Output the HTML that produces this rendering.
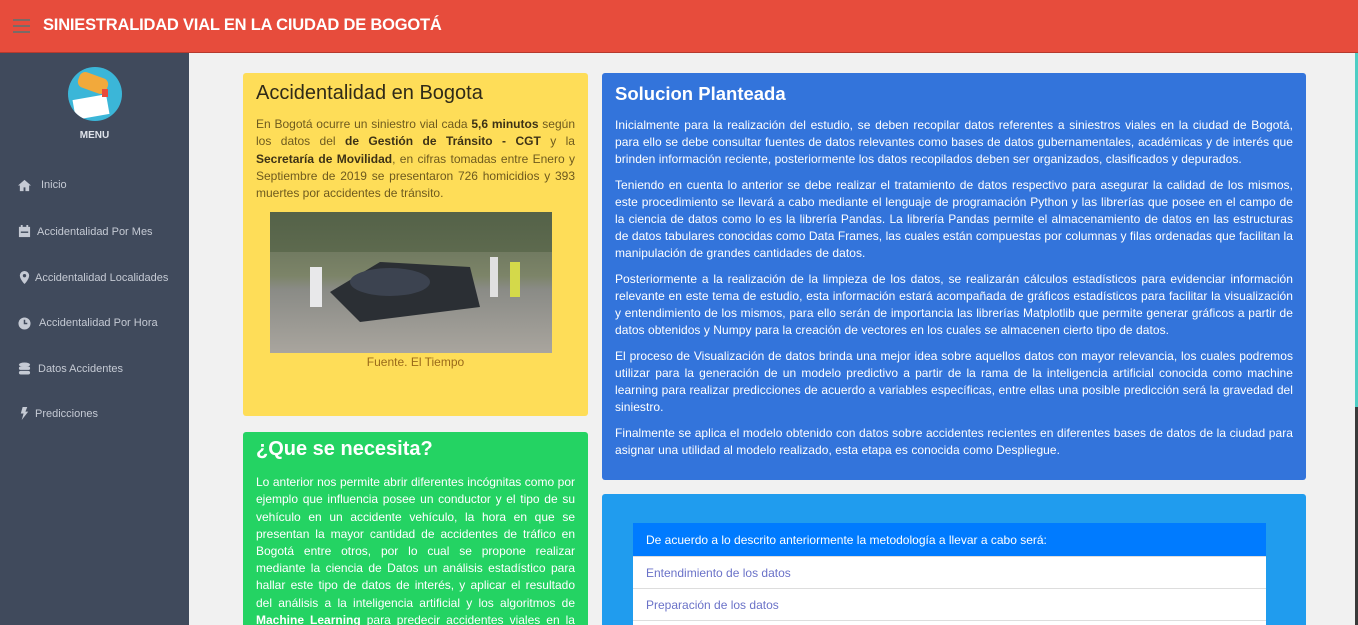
<!DOCTYPE html>
<html><head><meta charset="utf-8"><style>
*{margin:0;padding:0;box-sizing:border-box}
html{overflow:hidden;height:625px}
body{width:1358px;height:625px;overflow:hidden;background:#f1f1f1;font-family:"Liberation Sans",sans-serif;position:relative}
.hdr{position:absolute;left:0;top:0;width:1358px;height:53px;background:#e74c3c;border-bottom:1px solid #b53a2e}
.hdr .t{position:absolute;left:43px;top:16px;color:#fff;font-weight:bold;font-size:16.5px;letter-spacing:-0.2px}
.burger{position:absolute;left:13px;top:19px;width:17px}
.burger i{display:block;height:2px;background:#7a6a66;margin-bottom:4px}
.side{position:absolute;left:0;top:53px;width:189px;height:572px;background:#404a5c}
.logo{position:absolute;left:68px;top:14px;width:54px;height:54px;border-radius:50%;background:#3bb6d8;overflow:hidden}
.menu{position:absolute;left:0;width:189px;top:77px;text-align:center;color:#dfe3ea;font-weight:bold;font-size:10px}
.it{position:absolute;color:#c5cad4;font-size:11px}
.ic{position:absolute;left:18px;width:13px;height:13px}
.card{position:absolute;border-radius:3px;padding:0 13px;text-align:justify;font-size:12px;line-height:17.2px;overflow:hidden}
.card h2{font-weight:normal;font-size:20px;margin:12px 0 14px}
.y{left:243px;top:73px;width:345px;height:343px;background:#fedd58;color:#6e5a1e}
.y b{color:#3d3216;font-weight:bold}
.y h2{color:#2f2a18}
.g{left:243px;top:432px;width:345px;height:200px;background:#24d363;color:#fff}
.g h2{font-weight:bold;font-size:20px;margin:9px 0 16px}
.bl{left:602px;top:73px;width:704px;height:407px;background:#3374db;color:#fff;letter-spacing:0.05px;line-height:17px}
.bl h2{font-weight:bold;font-size:18.5px;margin:12px 0 15px;letter-spacing:0}
.bl p{margin-bottom:9px}
.lb{position:absolute;left:602px;top:494px;width:704px;height:140px;background:#209cee;border-radius:3px;overflow:hidden}
.list{position:absolute;left:31px;top:29px;width:633px;background:#fff;border-radius:3px 3px 0 0}
.list div{height:32px;line-height:32px;padding-left:13px;font-size:12px;color:#6a72c8;border-bottom:1px solid #ddd}
.list .h{height:34px;line-height:34px;background:#007bff;color:#fff}
.sb{position:absolute;left:1355px;top:53px;width:3px;height:354px;background:#4ecdc4}
.sb2{position:absolute;left:1355px;top:407px;width:3px;height:218px;background:#3a3a3a}
</style></head><body>
<div class="hdr"><div class="burger"><i></i><i></i><i></i></div><div class="t">SINIESTRALIDAD VIAL EN LA CIUDAD DE BOGOTÁ</div></div>
<div class="side">
 <div class="logo"><svg width="54" height="54"><rect x="10" y="8" width="30" height="16" rx="6" fill="#f2a93b" transform="rotate(20 25 16)"/><rect x="6" y="30" width="34" height="20" fill="#fff" transform="rotate(-10 23 40)"/><rect x="34" y="22" width="6" height="8" fill="#e84c3d"/></svg></div>
 <div class="menu">MENU</div>
 <svg class="ic" style="top:126px" viewBox="0 0 14 14"><path d="M7 1L0 7h2v6h4V9h2v4h4V7h2z" fill="#c5cad4"/></svg><div class="it" style="left:41px;top:126px">Inicio</div>
 <svg class="ic" style="top:172px" viewBox="0 0 14 14"><rect x="1" y="2" width="12" height="11" fill="#c5cad4"/><rect x="3" y="0" width="2" height="3" fill="#c5cad4"/><rect x="9" y="0" width="2" height="3" fill="#c5cad4"/><rect x="3" y="7" width="8" height="1.5" fill="#404a5c"/></svg><div class="it" style="left:37px;top:173px">Accidentalidad Por Mes</div>
 <svg class="ic" style="top:218px" viewBox="0 0 14 14"><path d="M7 0a5 5 0 0 0-5 5c0 4 5 9 5 9s5-5 5-9a5 5 0 0 0-5-5z" fill="#c5cad4"/><circle cx="7" cy="5" r="1.8" fill="#404a5c"/></svg><div class="it" style="left:35px;top:219px">Accidentalidad Localidades</div>
 <svg class="ic" style="top:264px" viewBox="0 0 14 14"><circle cx="7" cy="7" r="6.5" fill="#c5cad4"/><path d="M7 3v4h3" stroke="#404a5c" stroke-width="1.6" fill="none"/></svg><div class="it" style="left:39px;top:264px">Accidentalidad Por Hora</div>
 <svg class="ic" style="top:309px" viewBox="0 0 14 14"><ellipse cx="7" cy="3" rx="6" ry="2.5" fill="#c5cad4"/><rect x="1" y="5" width="12" height="3.5" rx="1.5" fill="#c5cad4"/><rect x="1" y="9.5" width="12" height="4" rx="2" fill="#c5cad4"/></svg><div class="it" style="left:38px;top:310px">Datos Accidentes</div>
 <svg class="ic" style="top:354px" viewBox="0 0 14 14"><path d="M5 0h5L8 5h3L4 14l2-7H3z" fill="#c5cad4"/></svg><div class="it" style="left:35px;top:355px">Predicciones</div>
</div>
<div class="card y"><h2>Accidentalidad en Bogota</h2>
<div>En Bogotá ocurre un siniestro vial cada <b>5,6 minutos</b> según los datos del <b>de Gestión de Tránsito - CGT</b> y la <b>Secretaría de Movilidad</b>, en cifras tomadas entre Enero y Septiembre de 2019 se presentaron 726 homicidios y 393 muertes por accidentes de tránsito.</div>
<svg style="position:absolute;left:27px;top:139px" width="282" height="141"><defs><linearGradient id="a" x1="0" y1="0" x2="0" y2="1"><stop offset="0" stop-color="#5f6a55"/><stop offset=".45" stop-color="#7c8468"/><stop offset=".55" stop-color="#8a8b86"/><stop offset="1" stop-color="#a9a59e"/></linearGradient></defs><rect width="282" height="141" fill="url(#a)"/><rect x="0" y="0" width="282" height="40" fill="#4a5a3c" opacity=".5"/><path d="M60 80 L110 50 L200 55 L210 95 L90 110 Z" fill="#2b2f34"/><ellipse cx="120" cy="70" rx="40" ry="14" fill="#3c4350"/><rect x="40" y="55" width="12" height="40" fill="#e8e8ea"/><rect x="240" y="50" width="10" height="35" fill="#d4d94a"/><rect x="220" y="45" width="8" height="40" fill="#e0e0e0"/></svg>
<div style="position:absolute;left:0;top:281px;width:345px;text-align:center;color:#9a6a1a">Fuente. El Tiempo</div>
</div>
<div class="card g"><h2>¿Que se necesita?</h2>
<div>Lo anterior nos permite abrir diferentes incógnitas como por ejemplo que influencia posee un conductor y el tipo de su vehículo en un accidente vehículo, la hora en que se presentan la mayor cantidad de accidentes de tráfico en Bogotá entre otros, por lo cual se propone realizar mediante la ciencia de Datos un análisis estadístico para hallar este tipo de datos de interés, y aplicar el resultado del análisis a la inteligencia artificial y los algoritmos de <b>Machine Learning</b> para predecir accidentes viales en la ciudad.</div></div>
<div class="card bl"><h2>Solucion Planteada</h2>
<p>Inicialmente para la realización del estudio, se deben recopilar datos referentes a siniestros viales en la ciudad de Bogotá, para ello se debe consultar fuentes de datos relevantes como bases de datos gubernamentales, académicas y de interés que brinden información reciente, posteriormente los datos recopilados deben ser organizados, clasificados y depurados.</p>
<p>Teniendo en cuenta lo anterior se debe realizar el tratamiento de datos respectivo para asegurar la calidad de los mismos, este procedimiento se llevará a cabo mediante el lenguaje de programación Python y las librerías que posee en el campo de la ciencia de datos como lo es la librería Pandas. La librería Pandas permite el almacenamiento de datos en las estructuras de datos tabulares conocidas como Data Frames, las cuales están compuestas por columnas y filas ordenadas que facilitan la manipulación de grandes cantidades de datos.</p>
<p>Posteriormente a la realización de la limpieza de los datos, se realizarán cálculos estadísticos para evidenciar información relevante en este tema de estudio, esta información estará acompañada de gráficos estadísticos para facilitar la visualización y entendimiento de los mismos, para ello serán de importancia las librerías Matplotlib que permite generar gráficos a partir de datos obtenidos y Numpy para la creación de vectores en los cuales se almacenen cierto tipo de datos.</p>
<p>El proceso de Visualización de datos brinda una mejor idea sobre aquellos datos con mayor relevancia, los cuales podremos utilizar para la generación de un modelo predictivo a partir de la rama de la inteligencia artificial conocida como machine learning para realizar predicciones de acuerdo a variables específicas, entre ellas una posible predicción será la gravedad del siniestro.</p>
<p>Finalmente se aplica el modelo obtenido con datos sobre accidentes recientes en diferentes bases de datos de la ciudad para asignar una utilidad al modelo realizado, esta etapa es conocida como Despliegue.</p></div>
<div class="lb"><div class="list"><div class="h">De acuerdo a lo descrito anteriormente la metodología a llevar a cabo será:</div><div>Entendimiento de los datos</div><div>Preparación de los datos</div><div>Modelado</div></div></div>
<div class="sb"></div><div class="sb2"></div>
</body></html>
